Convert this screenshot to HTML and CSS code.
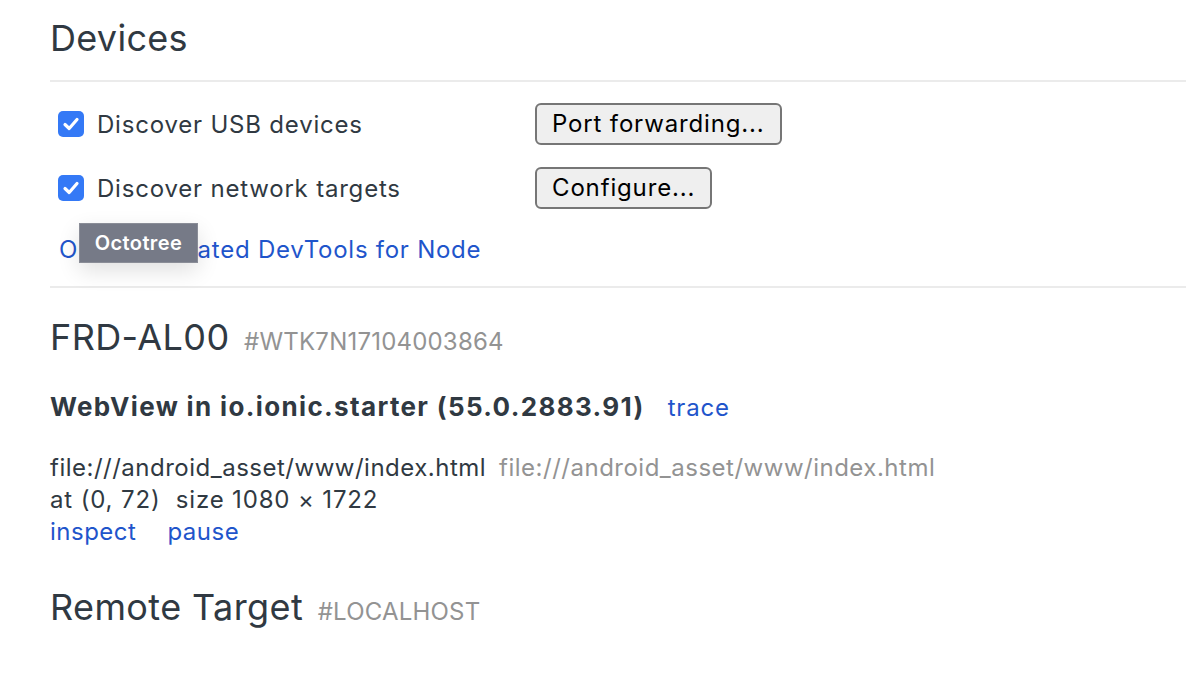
FILE: index.html
```html
<!DOCTYPE html>
<html>
<head>
<meta charset="utf-8">
<link rel="stylesheet" href="styles.css">
</head>
<body>
<div class="page">
  <header class="section-head">
    <h1 class="title">Devices</h1>
  </header>
  <div class="options">
    <div class="opt-row">
      <label class="opt-label"><span class="cbox"><svg viewBox="0 0 26 26" width="26" height="26"><path d="M7 13.5 L11.2 17.5 L19 8.5" fill="none" stroke="#fff" stroke-width="3.2" stroke-linecap="round" stroke-linejoin="round"/></svg></span>Discover USB devices</label>
      <button class="btn">Port forwarding...</button>
    </div>
    <div class="opt-row">
      <label class="opt-label"><span class="cbox"><svg viewBox="0 0 26 26" width="26" height="26"><path d="M7 13.5 L11.2 17.5 L19 8.5" fill="none" stroke="#fff" stroke-width="3.2" stroke-linecap="round" stroke-linejoin="round"/></svg></span>Discover network targets</label>
      <button class="btn">Configure...</button>
    </div>
    <div class="node-row">
      <a class="link node-link">Open dedicated DevTools for Node</a>
      <span class="tooltip">Octotree</span>
    </div>
  </div>
  <div class="device">
    <h2 class="device-name">FRD-AL00 <span class="serial">#WTK7N17104003864</span></h2>
    <div class="browser">
      <span class="browser-name">WebView in io.ionic.starter (55.0.2883.91)</span>
      <a class="link trace">trace</a>
    </div>
    <div class="target">
      <div class="line"><span>file:///android_asset/www/index.html</span><span class="url">file:///android_asset/www/index.html</span></div>
      <div class="line geom">at (0, 72)&nbsp; size 1080 × 1722</div>
      <div class="line actions"><a class="link">inspect</a><a class="link">pause</a></div>
    </div>
    <h2 class="device-name remote">Remote Target <span class="serial">#LOCALHOST</span></h2>
  </div>
</div>
</body>
</html>
```
FILE: styles.css
```css
html, body {
  margin: 0;
  padding: 0;
  background: #fff;
}
body {
  font-family: Inter, "Noto Sans", "Liberation Sans", sans-serif;
  color: #303942;
  overflow: hidden;
}
.page {
  padding-left: 50px;
}
.section-head {
  height: 80px;
  border-bottom: 2px solid #ebebeb;
  display: flex;
  align-items: center;
}
.title {
  margin: 0;
  font-size: 36px;
  font-weight: 400;
  line-height: 1;
  padding-bottom: 4px;
  letter-spacing: 0.3px;
}
.options {
  padding: 10px 0 0 8px;
  border-bottom: 2px solid #ebebeb;
}
.opt-row {
  height: 64px;
  display: grid;
  grid-template-columns: 477px auto;
  align-items: center;
}
.opt-label {
  display: flex;
  align-items: center;
  gap: 13px;
  font-size: 24px;
  letter-spacing: 0.8px;
}
.cbox {
  width: 26px;
  height: 26px;
  border-radius: 5px;
  background: #3479f6;
  display: block;
  flex: none;
}
.cbox svg { display: block; }
.btn {
  justify-self: start;
  font-family: inherit;
  font-size: 24px;
  letter-spacing: 0.85px;
  color: #000;
  background: #efefef;
  border: 2px solid #767676;
  border-radius: 6px;
  padding: 0 15px;
  height: 42px;
  line-height: 38px;
}
.node-row {
  position: relative;
  height: 66px;
  box-sizing: border-box;
  padding-bottom: 8px;
  display: flex;
  align-items: center;
  padding-left: 1px;
}
.link {
  color: #1f55cb;
  text-decoration: none;
}
.node-link {
  font-size: 24px;
  letter-spacing: 0.75px;
}
.tooltip {
  position: absolute;
  left: 21px;
  top: 3px;
  width: 119px;
  height: 40px;
  box-sizing: border-box;
  background: #767a87;
  border: 1px solid #8a8d97;
  color: #fff;
  font-size: 20px;
  font-weight: 600;
  letter-spacing: 0.4px;
  display: flex;
  align-items: center;
  justify-content: center;
  box-shadow: 0 8px 22px rgba(0,0,0,0.12);
}
.device {
  padding-top: 28px;
}
.device-name {
  margin: 0;
  font-size: 36px;
  font-weight: 400;
  line-height: 42px;
  letter-spacing: 0.4px;
}
.serial {
  font-size: 24px;
  color: #939393;
  margin-left: 4px;
  letter-spacing: 0.2px;
}
.browser {
  margin-top: 27px;
  display: flex;
  align-items: baseline;
  gap: 23px;
  font-size: 26px;
  line-height: 34px;
}
.browser-name {
  font-weight: 700;
  letter-spacing: 1.35px;
}
.trace {
  font-size: 24px;
  letter-spacing: 0.8px;
}
.target {
  margin-top: 27px;
  font-size: 24px;
  line-height: 32px;
  letter-spacing: 0.5px;
}
.geom {
  letter-spacing: 0.85px;
}
.url {
  color: #939393;
  margin-left: 13px;
}
.actions {
  display: flex;
  gap: 31px;
}
.remote {
  margin-top: 38px;
}
```
